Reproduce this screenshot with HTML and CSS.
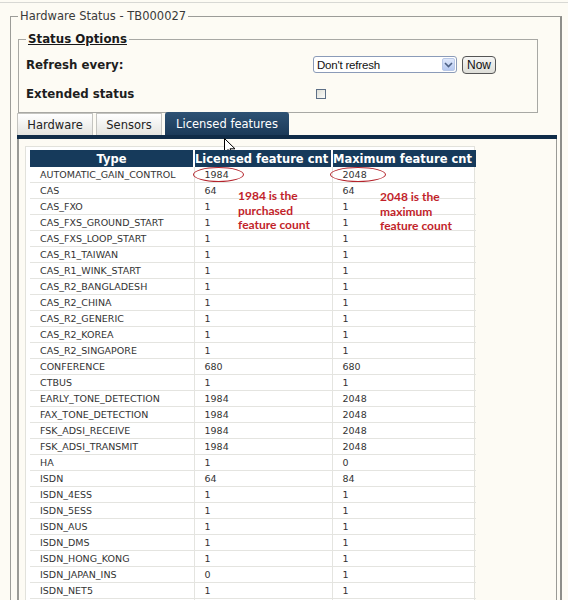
FILE: index.html
```html
<!DOCTYPE html>
<html>
<head>
<meta charset="utf-8">
<title>Hardware Status</title>
<link rel="stylesheet" href="styles.css">
</head>
<body>
<div class="page">
  <fieldset class="outer">
    <legend>Hardware Status - TB000027</legend>

    <fieldset class="options">
      <legend>Status Options</legend>
      <div class="opt-row">
        <span class="opt-label">Refresh every:</span>
        <span class="opt-control">
          <span class="select"><span class="select-text">Don't refresh</span><span class="select-btn"><svg width="9" height="6" viewBox="0 0 9 6"><path d="M1 1 L4.5 4.5 L8 1" fill="none" stroke="#4d6185" stroke-width="1.6"/></svg></span></span>
          <span class="btn">Now</span>
        </span>
      </div>
      <div class="opt-row">
        <span class="opt-label">Extended status</span>
        <span class="opt-control"><span class="checkbox"></span></span>
      </div>
    </fieldset>

    <div class="tabs-area">
      <div class="tabs">
        <span class="tab">Hardware</span>
        <span class="tab">Sensors</span>
        <span class="tab active">Licensed features</span>
      </div>
      <div class="tab-bar"></div>
      <svg class="cursor" width="12" height="19" viewBox="0 0 12 19"><path d="M0.5 0.5 L0.5 15 L4 11.5 L6.5 17.5 L8.5 16.6 L6 10.8 L11 10.8 Z" fill="#fff" stroke="#000" stroke-width="1"/></svg>
    </div>

    <div class="tab-body">
      <div class="panel">
        <div class="table-wrap">
          <table class="features">
            <thead>
              <tr><th class="c-type">Type</th><th class="c-lic">Licensed feature cnt</th><th class="c-max">Maximum feature cnt</th></tr>
            </thead>
            <tbody>
              <tr><td>AUTOMATIC_GAIN_CONTROL</td><td>1984</td><td>2048</td></tr>
              <tr><td>CAS</td><td>64</td><td>64</td></tr>
              <tr><td>CAS_FXO</td><td>1</td><td>1</td></tr>
              <tr><td>CAS_FXS_GROUND_START</td><td>1</td><td>1</td></tr>
              <tr><td>CAS_FXS_LOOP_START</td><td>1</td><td>1</td></tr>
              <tr><td>CAS_R1_TAIWAN</td><td>1</td><td>1</td></tr>
              <tr><td>CAS_R1_WINK_START</td><td>1</td><td>1</td></tr>
              <tr><td>CAS_R2_BANGLADESH</td><td>1</td><td>1</td></tr>
              <tr><td>CAS_R2_CHINA</td><td>1</td><td>1</td></tr>
              <tr><td>CAS_R2_GENERIC</td><td>1</td><td>1</td></tr>
              <tr><td>CAS_R2_KOREA</td><td>1</td><td>1</td></tr>
              <tr><td>CAS_R2_SINGAPORE</td><td>1</td><td>1</td></tr>
              <tr><td>CONFERENCE</td><td>680</td><td>680</td></tr>
              <tr><td>CTBUS</td><td>1</td><td>1</td></tr>
              <tr><td>EARLY_TONE_DETECTION</td><td>1984</td><td>2048</td></tr>
              <tr><td>FAX_TONE_DETECTION</td><td>1984</td><td>2048</td></tr>
              <tr><td>FSK_ADSI_RECEIVE</td><td>1984</td><td>2048</td></tr>
              <tr><td>FSK_ADSI_TRANSMIT</td><td>1984</td><td>2048</td></tr>
              <tr><td>HA</td><td>1</td><td>0</td></tr>
              <tr><td>ISDN</td><td>64</td><td>84</td></tr>
              <tr><td>ISDN_4ESS</td><td>1</td><td>1</td></tr>
              <tr><td>ISDN_5ESS</td><td>1</td><td>1</td></tr>
              <tr><td>ISDN_AUS</td><td>1</td><td>1</td></tr>
              <tr><td>ISDN_DMS</td><td>1</td><td>1</td></tr>
              <tr><td>ISDN_HONG_KONG</td><td>1</td><td>1</td></tr>
              <tr><td>ISDN_JAPAN_INS</td><td>0</td><td>1</td></tr>
              <tr><td>ISDN_NET5</td><td>1</td><td>1</td></tr>
              <tr class="blank"><td></td><td></td><td></td></tr>
            </tbody>
          </table>

          <span class="ring ring-lic"></span>
          <span class="ring ring-max"></span>
          <p class="note note-lic">1984 is the<br>purchased<br>feature count</p>
          <p class="note note-max">2048 is the<br>maximum<br>feature count</p>
        </div>
      </div>
    </div>
  </fieldset>
</div>
</body>
</html>
```

FILE: styles.css
```css
html, body {
  margin: 0;
  padding: 0;
  background: #fdfbf4;
}

body {
  font-family: "DejaVu Sans", Verdana, sans-serif;
  font-size: 11.5px;
  color: #222;
  overflow: hidden;
}

.page {
  border-top: 1px solid #d8d8d4;
  margin-top: 2px;
  padding: 6px 0 0 10px;
  height: 640px;
}

/* outer group box */
.outer {
  margin: 0;
  width: 540px;
  padding: 0 2px 0 7px;
  border: 1px solid #9c9c98;
  border-right: 2px solid #8e8e8a;
  border-bottom: none;
  min-width: 0;
  height: 660px;
}

.outer > legend {
  padding: 0 2px;
  color: #3a3a3a;
  line-height: 14px;
  font-size: 11.5px;
}

/* refresh options */
.options {
  margin: 10px 0 0 0;
  width: 520px;
  padding: 0 3px 0 7px;
  border: 1px solid #a8a8a4;
  height: 80px;
  box-sizing: border-box;
}

.options > legend {
  padding: 0 2px;
  font-weight: bold;
  text-decoration: underline;
  font-size: 11.8px;
  line-height: 13px;
  color: #1a1a1a;
}

.opt-row {
  display: flex;
  align-items: center;
  height: 29px;
}

.opt-row:first-of-type {
  margin-top: 4px;
}

.opt-label {
  width: 287px;
  font-weight: bold;
  font-size: 11.8px;
  color: #1e1e1e;
}

.opt-control {
  display: flex;
  align-items: center;
  gap: 5px;
}

.select {
  display: flex;
  align-items: center;
  justify-content: space-between;
  width: 144px;
  height: 17px;
  box-sizing: border-box;
  border: 1px solid #8b9bb8;
  border-radius: 3px;
  background: #fff;
  padding: 0 1px 0 3px;
  font-family: "Liberation Sans", Arial, sans-serif;
  font-size: 11.5px;
  color: #111;
  letter-spacing: -0.2px;
}

.select-btn {
  display: flex;
  align-items: center;
  justify-content: center;
  width: 13px;
  height: 13px;
  border-radius: 2px;
  background: linear-gradient(#dfe8fb, #b5c8f0);
  border: 1px solid #b9c8e6;
  box-sizing: border-box;
}

.btn {
  display: inline-flex;
  align-items: center;
  justify-content: center;
  width: 34px;
  height: 18px;
  box-sizing: border-box;
  border: 1px solid #555;
  border-radius: 4px;
  background: linear-gradient(#f6f6f4, #deded8);
  font-family: "Liberation Sans", Arial, sans-serif;
  font-size: 12px;
  color: #111;
}

.checkbox {
  display: inline-block;
  width: 10px;
  height: 10px;
  margin-left: 3px;
  border: 1px solid #5d6f86;
  box-sizing: border-box;
  background: linear-gradient(135deg, #dedfd8, #fbfbf8);
}

/* tab strip */
.tabs-area {
  position: relative;
  margin: -1px 0 0 -1px;
}

.tabs {
  display: flex;
  align-items: flex-end;
  gap: 3px;
  height: 23px;
}

.tab {
  display: flex;
  align-items: center;
  justify-content: center;
  height: 22px;
  box-sizing: border-box;
  padding-top: 1px;
  border: 1px solid #c4c4c0;
  border-bottom: none;
  background: linear-gradient(#ffffff, #e4e4e0);
  color: #222;
}

.tab:nth-child(1) { width: 76px; }
.tab:nth-child(2) { width: 66px; }

.tab.active {
  width: 124px;
  height: 23px;
  border: none;
  border-radius: 3px 3px 0 0;
  background: linear-gradient(#2e5274, #1b3a59);
  color: #fff;
}

.tab-bar {
  height: 4px;
  width: 540px;
  background: #102c48;
}

.cursor {
  position: absolute;
  left: 207px;
  top: 26px;
}

/* tab content */
.tab-body {
  width: 540px;
  margin-left: -1px;
  box-sizing: border-box;
  border-left: 2px solid #9a9a96;
  border-right: 1px solid #9a9a96;
  padding: 7px 0 0 6px;
  height: 500px;
}

.panel {
  width: 450px;
  box-sizing: border-box;
  border: 1px solid #e2e2dc;
  border-bottom: none;
  background: #fff;
  padding: 3px 2px 0 4px;
}

.table-wrap {
  position: relative;
}

.features {
  border-collapse: collapse;
  width: 442px;
  table-layout: fixed;
  font-size: 9.5px;
  color: #333;
}

.features th {
  background: #163a5b;
  color: #fff;
  font-weight: bold;
  font-size: 11.5px;
  height: 17px;
  padding: 0;
  line-height: 16px;
  border-left: 2px solid #fff;
  white-space: nowrap;
  overflow: hidden;
}

.features th:first-child {
  border-left: none;
}

.c-type { width: 163px; }
.c-lic { width: 136px; text-align: left; }
.c-max { width: 143px; text-align: left; }

.features td {
  height: 15px;
  padding: 0 0 0 10px;
  line-height: 15px;
  border-bottom: 1px solid #e4e4e0;
  border-left: 1px solid #e4e4e0;
  white-space: nowrap;
}

.features td:first-child {
  border-left: none;
}

/* red annotations */
.ring {
  position: absolute;
  border: 1.5px solid #b4242c;
  border-radius: 50%;
  height: 15px;
  top: 17px;
  box-sizing: border-box;
}

.ring-lic { left: 163px; width: 51px; }
.ring-max { left: 300px; width: 56px; }

.note {
  position: absolute;
  margin: 0;
  font-family: Lato, "Open Sans", sans-serif;
  font-weight: bold;
  font-size: 12px;
  line-height: 14.5px;
  color: #c21f2b;
}

.note-lic { left: 208px; top: 39px; }
.note-max { left: 350px; top: 40px; }
```
